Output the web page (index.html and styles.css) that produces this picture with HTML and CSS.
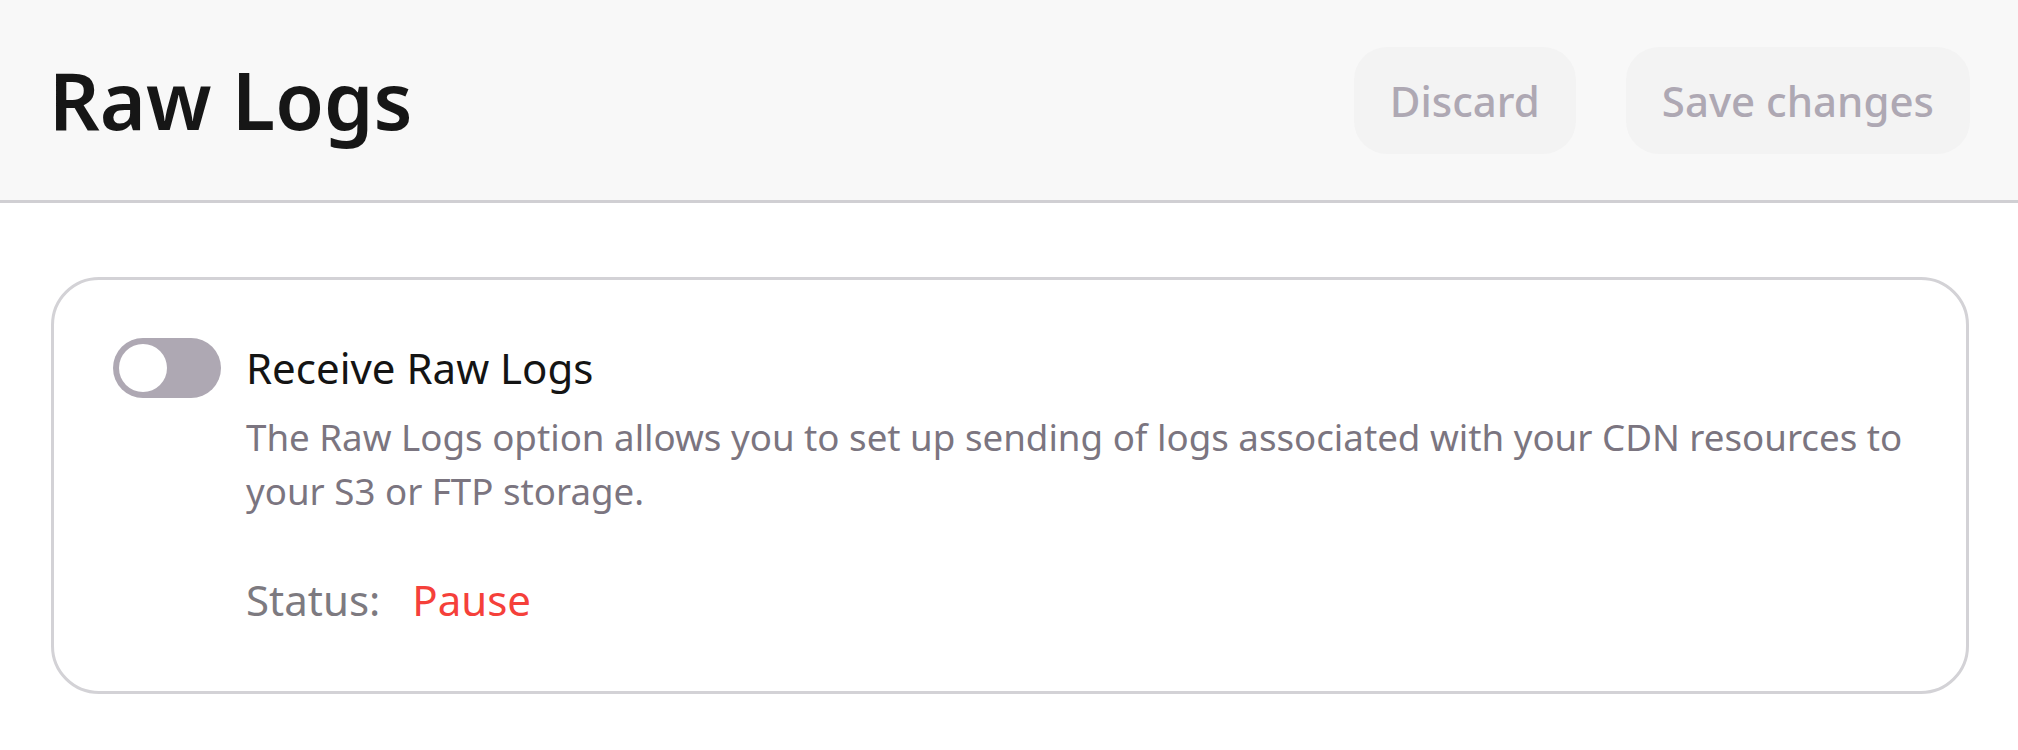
FILE: index.html
```html
<!DOCTYPE html>
<html lang="en">
<head>
<meta charset="utf-8">
<title>Raw Logs</title>
<link rel="stylesheet" href="styles.css">
</head>
<body>
<header class="page-header">
  <h1 class="page-title">Raw Logs</h1>
  <div class="actions">
    <button class="btn" type="button">Discard</button>
    <button class="btn" type="button">Save changes</button>
  </div>
</header>
<main class="content">
  <section class="card">
    <div class="option-row">
      <span class="toggle"><span class="knob"></span></span>
      <span class="option-title">Receive Raw Logs</span>
    </div>
    <div class="option-body">
      <p class="description">The Raw Logs option allows you to set up sending of logs associated with your CDN resources to your S3 or FTP storage.</p>
      <div class="status">
        <span class="status-label">Status:</span>
        <span class="status-value">Pause</span>
      </div>
    </div>
  </section>
</main>
</body>
</html>
```

FILE: styles.css
```css
* { box-sizing: border-box; }
html, body {
  margin: 0;
  padding: 0;
  background: #ffffff;
  font-family: "Noto Sans", "Open Sans", sans-serif;
}
.page-header {
  display: flex;
  align-items: center;
  justify-content: space-between;
  height: 203px;
  padding: 0 48px 0 49px;
  background: #f8f8f8;
  border-bottom: 3px solid #d0cfd3;
}
.page-title {
  margin: 0;
  font-size: 79px;
  line-height: 96px;
  font-weight: 600;
  color: #161616;
}
.actions {
  display: flex;
  gap: 50px;
  align-items: center;
}
.btn {
  font-family: "Noto Sans", "Open Sans", sans-serif;
  font-size: 42px;
  font-weight: 500;
  line-height: 57px;
  color: #aea8b3;
  background: #f3f3f3;
  border: none;
  border-radius: 33px;
  padding: 25px 36px;
  cursor: default;
}
.content {
  padding: 74px 49px 0 51px;
}
.card {
  border: 3px solid #d3d2d6;
  border-radius: 48px;
  padding: 58px 59px 61px 59px;
}
.option-row {
  display: flex;
  align-items: center;
  gap: 25px;
}
.toggle {
  flex: none;
  display: flex;
  align-items: center;
  width: 108px;
  height: 60px;
  padding: 6px;
  border-radius: 30px;
  background: #aea8b3;
}
.knob {
  width: 48px;
  height: 48px;
  border-radius: 50%;
  background: #ffffff;
}
.option-title {
  font-size: 42px;
  line-height: 60px;
  color: #141414;
}
.option-body {
  padding-left: 133px;
}
.description {
  margin: 12px 0 0;
  font-size: 36.7px;
  line-height: 54px;
  color: #7b7580;
  max-width: 1690px;
}
.status {
  display: flex;
  gap: 32px;
  margin-top: 52px;
  font-size: 42px;
  line-height: 60px;
}
.status-label { color: #7d7a80; }
.status-value { color: #f5403a; }
```
